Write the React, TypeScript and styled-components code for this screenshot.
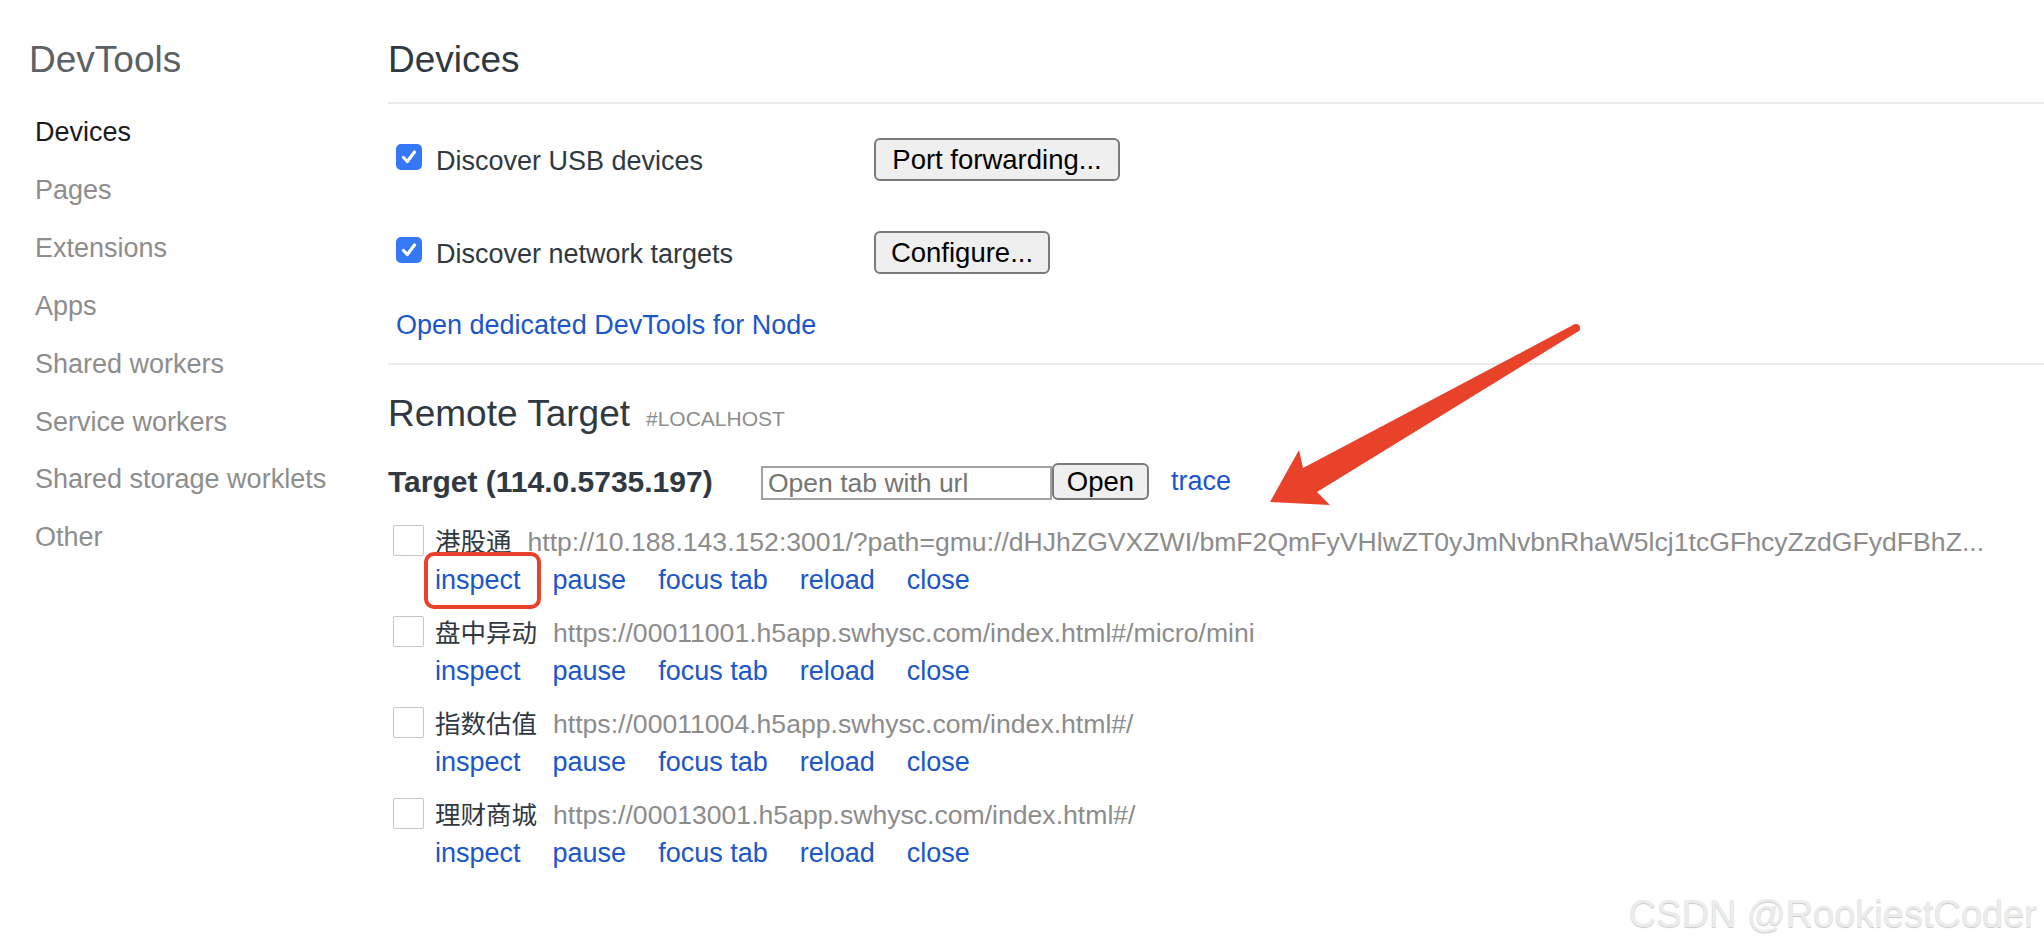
import React from 'react';
import styled, { createGlobalStyle } from 'styled-components';

const GlobalStyle = createGlobalStyle`
  html, body { margin: 0; padding: 0; background: #ffffff; }
  body {
    font-family: "Liberation Sans", Arial, "Noto Sans CJK SC", sans-serif;
    color: #303942;
  }
  * { box-sizing: border-box; }
`;

const LINK = '#1a56cc';
const RED = '#e8432a';

const Page = styled.div`
  position: relative;
  display: flex;
  width: 2044px;
  min-height: 948px;
  overflow: hidden;
`;

const Sidebar = styled.nav`
  width: 388px;
  flex: none;
  padding-top: 38px;
`;

const SideTitle = styled.div`
  font-size: 37px;
  line-height: 44px;
  color: #5c6166;
  padding-left: 29px;
  margin-bottom: 22px;
`;

const NavItem = styled.div<{ $active?: boolean }>`
  font-size: 27px;
  line-height: 57.9px;
  padding-left: 35px;
  color: ${(p) => (p.$active ? '#1b1b1b' : '#8d8d8d')};
  white-space: nowrap;
`;

const Main = styled.main`
  flex: 1;
  min-width: 0;
  padding-top: 38px;
`;

const PageHeader = styled.h1`
  margin: 0;
  font-size: 37px;
  line-height: 44px;
  font-weight: normal;
  color: #303942;
  padding-bottom: 20px;
  border-bottom: 2px solid #ebebeb;
`;

const Section = styled.section`
  padding-top: 34px;
  padding-bottom: 20px;
  border-bottom: 2px solid #ebebeb;
`;

const Options = styled.div`
  display: flex;
  flex-direction: column;
  gap: 50px;
`;

const OptionRow = styled.div`
  display: flex;
  align-items: center;
  height: 43px;
  padding-left: 8px;
`;

const CheckLabel = styled.label`
  display: flex;
  align-items: center;
  gap: 14px;
  width: 478px;
  padding-top: 3px;
  font-size: 27px;
  color: #303942;
`;

const CheckedBox = styled.span`
  display: grid;
  place-items: center;
  width: 26px;
  height: 26px;
  border-radius: 5px;
  background: #3478f6;
  margin-bottom: 9px;
`;

const Button = styled.button<{ $w: number; $h: number }>`
  width: ${(p) => p.$w}px;
  height: ${(p) => p.$h}px;
  padding: 0;
  font-family: inherit;
  font-size: 27.5px;
  color: #000;
  background: #efefef;
  border: 2px solid #7a7a7a;
  border-radius: 6px;
  text-align: center;
`;

const BlockLink = styled.a`
  display: block;
  margin: 33px 0 0 8px;
  font-size: 27px;
  line-height: 36px;
  color: ${LINK};
  text-decoration: none;
`;

const SubHeader = styled.h2`
  margin: 27px 0 0;
  font-size: 37px;
  line-height: 44px;
  font-weight: normal;
  color: #303942;
`;

const HeaderTag = styled.span`
  margin-left: 16px;
  font-size: 21px;
  line-height: 1;
  color: #8d8d8d;
`;

const TargetBar = styled.div`
  display: flex;
  align-items: center;
  height: 37px;
  margin-top: 27px;
`;

const TargetName = styled.div`
  width: 373px;
  font-size: 30px;
  font-weight: bold;
  color: #303942;
  white-space: nowrap;
`;

const UrlInput = styled.input`
  width: 291px;
  height: 34px;
  margin-top: 3px;
  padding: 0 5px;
  font-family: inherit;
  font-size: 26.5px;
  color: #303942;
  border: 2px solid #a2a2a2;
  border-radius: 0;
  outline: none;
  &::placeholder { color: #757575; }
`;

const InlineLink = styled.a<{ $ml?: number }>`
  margin-left: ${(p) => p.$ml ?? 0}px;
  font-size: 27px;
  line-height: 35px;
  color: ${LINK};
  text-decoration: none;
  white-space: nowrap;
`;

const TargetList = styled.div`
  display: flex;
  flex-direction: column;
  gap: 18.5px;
  margin-top: 25px;
`;

const PageRow = styled.div`
  display: grid;
  grid-template-columns: 31px 1fr;
  column-gap: 11px;
  padding-left: 5px;
`;

const RowBox = styled.span`
  display: block;
  width: 31px;
  height: 31px;
  border: 1px solid #c6c6c6;
  border-radius: 2px;
  background: #fff;
`;

const RowInfo = styled.div`
  min-width: 0;
`;

const TitleLine = styled.div`
  display: flex;
  align-items: baseline;
  height: 35px;
  white-space: nowrap;
`;

const PageTitle = styled.span`
  font-family: "Noto Sans CJK SC", sans-serif;
  font-size: 25.5px;
  line-height: 30px;
  color: #303942;
`;

const PageUrl = styled.span`
  margin-left: 16px;
  font-size: 26.6px;
  line-height: 35px;
  color: #8c8c8c;
`;

const Actions = styled.div`
  display: flex;
  gap: 32px;
  margin-top: 2.5px;
`;

const Annotated = styled.span`
  position: relative;
  display: inline-flex;
`;

const Highlight = styled.span`
  position: absolute;
  left: -11px;
  top: -10.5px;
  width: 117px;
  height: 57px;
  border: 4px solid ${RED};
  border-radius: 10px;
  pointer-events: none;
`;

const ArrowSvg = styled.svg`
  position: absolute;
  left: 1260px;
  top: 315px;
  width: 330px;
  height: 200px;
  pointer-events: none;
`;

const Watermark = styled.div`
  position: absolute;
  right: 7px;
  bottom: 12px;
  font-family: "Liberation Sans", Arial, sans-serif;
  font-size: 38px;
  line-height: 44px;
  color: #ececec;
  text-shadow: 0 1px 1px rgba(0, 0, 0, 0.22);
  white-space: nowrap;
  pointer-events: none;
`;

const navItems = [
  'Devices',
  'Pages',
  'Extensions',
  'Apps',
  'Shared workers',
  'Service workers',
  'Shared storage worklets',
  'Other',
];

const pages = [
  {
    title: '港股通',
    url: 'http://10.188.143.152:3001/?path=gmu://dHJhZGVXZWI/bmF2QmFyVHlwZT0yJmNvbnRhaW5lcj1tcGFhcyZzdGFydFBhZ...',
  },
  { title: '盘中异动', url: 'https://00011001.h5app.swhysc.com/index.html#/micro/mini' },
  { title: '指数估值', url: 'https://00011004.h5app.swhysc.com/index.html#/' },
  { title: '理财商城', url: 'https://00013001.h5app.swhysc.com/index.html#/' },
];

const actions = ['inspect', 'pause', 'focus tab', 'reload', 'close'];

const Check = () => (
  <CheckedBox>
    <svg width="18" height="18" viewBox="0 0 18 18">
      <path
        d="M3.5 9.5 L7.3 13.5 L14.5 4"
        fill="none"
        stroke="#fff"
        strokeWidth="3.2"
        strokeLinecap="round"
        strokeLinejoin="round"
      />
    </svg>
  </CheckedBox>
);

export default function App() {
  return (
    <>
      <GlobalStyle />
      <Page>
        <Sidebar>
          <SideTitle>DevTools</SideTitle>
          {navItems.map((n, i) => (
            <NavItem key={n} $active={i === 0}>
              {n}
            </NavItem>
          ))}
        </Sidebar>

        <Main>
          <PageHeader>Devices</PageHeader>

          <Section>
            <Options>
              <OptionRow>
                <CheckLabel>
                  <Check />
                  Discover USB devices
                </CheckLabel>
                <Button $w={246} $h={43}>Port forwarding...</Button>
              </OptionRow>
              <OptionRow>
                <CheckLabel>
                  <Check />
                  Discover network targets
                </CheckLabel>
                <Button $w={176} $h={43}>Configure...</Button>
              </OptionRow>
            </Options>
            <BlockLink>Open dedicated DevTools for Node</BlockLink>
          </Section>

          <SubHeader>
            Remote Target
            <HeaderTag>#LOCALHOST</HeaderTag>
          </SubHeader>

          <TargetBar>
            <TargetName>Target (114.0.5735.197)</TargetName>
            <UrlInput placeholder="Open tab with url" />
            <Button $w={97} $h={37}>Open</Button>
            <InlineLink $ml={22}>trace</InlineLink>
          </TargetBar>

          <TargetList>
            {pages.map((p, idx) => (
              <PageRow key={p.url}>
                <RowBox />
                <RowInfo>
                  <TitleLine>
                    <PageTitle>{p.title}</PageTitle>
                    <PageUrl>{p.url}</PageUrl>
                  </TitleLine>
                  <Actions>
                    {actions.map((a, ai) =>
                      idx === 0 && ai === 0 ? (
                        <Annotated key={a}>
                          <InlineLink>{a}</InlineLink>
                          <Highlight />
                        </Annotated>
                      ) : (
                        <InlineLink key={a}>{a}</InlineLink>
                      )
                    )}
                  </Actions>
                </RowInfo>
              </PageRow>
            ))}
          </TargetList>
        </Main>

        <ArrowSvg viewBox="0 0 330 200">
          <polygon
            points="10,187 39,135 43,153 314,9.5 318,16.5 57,177 70,190"
            fill={RED}
          />
          <circle cx="316" cy="13" r="4" fill={RED} />
        </ArrowSvg>

        <Watermark>CSDN @RookiestCoder</Watermark>
      </Page>
    </>
  );
}
